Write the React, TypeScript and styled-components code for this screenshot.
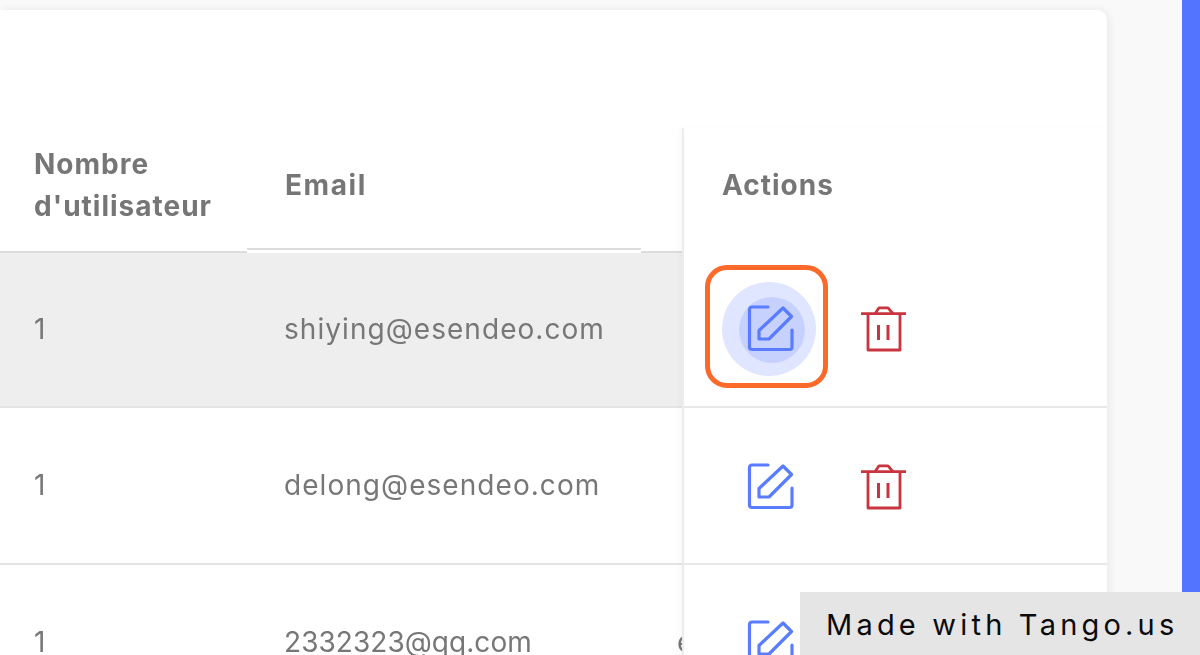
import React from "react";
import styled, { createGlobalStyle } from "styled-components";

const Global = createGlobalStyle`
  html, body { margin: 0; padding: 0; height: 100%; background: #f9f9f9; overflow: hidden; }
  body { font-family: "Inter", "Liberation Sans", sans-serif; }
`;

const Page = styled.div`
  position: relative;
  display: flex;
  width: 1200px;
  height: 655px;
  overflow: hidden;
  background: #f9f9f9;
`;

const Content = styled.div`
  display: flex;
  width: 1200px;
  height: 655px;
  filter: blur(0.7px);
`;

const Main = styled.main`
  flex: none;
  width: 1107px;
  padding-top: 10px;
`;

const Card = styled.section`
  display: flex;
  height: 800px;
  background: #fff;
  border-radius: 0 10px 0 0;
  box-shadow: 2px 0 8px rgba(0, 0, 0, 0.07);
`;

const TableArea = styled.div`
  flex: none;
  width: 683px;
  padding-top: 118px;
  overflow: hidden;
`;

const HeadRow = styled.div`
  display: grid;
  grid-template-columns: 247px 394px 42px;
  height: 125px;
  align-items: start;
`;

const HeadCell = styled.div<{ $raised?: boolean }>`
  display: flex;
  align-items: center;
  box-sizing: border-box;
  height: ${(p) => (p.$raised ? "122px" : "125px")};
  padding-left: ${(p) => (p.$raised ? 38 : 34)}px;
  padding-bottom: ${(p) => (p.$raised ? 6 : 9)}px;
  border-bottom: 2px solid #dcdcdc;
  color: #767676;
  font-size: 28px;
  font-weight: 700;
  line-height: 42px;
  letter-spacing: ${(p) => (p.$raised ? 1.6 : 1)}px;
  white-space: nowrap;
`;

const ClippedHead = styled(HeadCell)`
  padding-left: 40px;
  overflow: hidden;
`;

const Row = styled.div<{ $active?: boolean }>`
  display: grid;
  grid-template-columns: 247px 394px 42px;
  height: ${(p) => (p.$active ? 155 : 157)}px;
  box-sizing: border-box;
  align-items: center;
  padding-bottom: ${(p) => (p.$active ? 1 : 2)}px;
  border-bottom: 2px solid #e4e4e4;
  background: ${(p) => (p.$active ? "#eeeeee" : "#fff")};
  color: #777;
  font-size: 28px;
`;

const Cell = styled.div`
  padding-left: 34px;
  white-space: nowrap;
  letter-spacing: 0.96px;
`;

const EmailCell = styled(Cell)<{ $numeric?: boolean }>`
  padding-left: 37px;
  letter-spacing: ${(p) => (p.$numeric ? 0.05 : 1.05)}px;
`;

const ClippedCell = styled(Cell)`
  padding-left: 36px;
  overflow: hidden;
`;

const ActionsColumn = styled.div`
  flex: 1;
  border-left: 2px solid #ececec;
  box-shadow: -3px 0 5px rgba(0, 0, 0, 0.025);
  margin-top: 118px;
  margin-left: -1px;
`;

const ActionsHead = styled.div`
  height: 124px;
  box-sizing: border-box;
  display: flex;
  align-items: center;
  padding-left: 38px;
  padding-bottom: 11px;
  color: #767676;
  font-size: 28px;
  font-weight: 700;
  letter-spacing: 1px;
`;

const ActionRow = styled.div<{ $first?: boolean }>`
  height: ${(p) => (p.$first ? 156 : 157)}px;
  box-sizing: border-box;
  display: flex;
  align-items: center;
  padding-left: 21px;
  padding-bottom: ${(p) => (p.$first ? 5 : 2)}px;
  border-bottom: 2px solid #e8e8e8;
`;

const FocusBox = styled.button<{ $focused?: boolean }>`
  flex: none;
  box-sizing: border-box;
  width: 123px;
  height: 123px;
  display: flex;
  align-items: center;
  justify-content: center;
  padding: 4px 0 0 4px;
  background: transparent;
  border: 5px solid ${(p) => (p.$focused ? "#fb6a2a" : "transparent")};
  border-radius: 22px;
`;

const Halo = styled.span<{ $on?: boolean }>`
  width: 94px;
  height: 94px;
  flex: none;
  display: flex;
  align-items: center;
  justify-content: center;
  border-radius: 50%;
  background: ${(p) => (p.$on ? "#e0e6ff" : "transparent")};
`;

const HaloInner = styled.span<{ $on?: boolean }>`
  width: 66px;
  height: 66px;
  margin: 3px 0 0 6px;
  display: flex;
  align-items: center;
  justify-content: center;
  border-radius: 50%;
  background: ${(p) => (p.$on ? "#c6d1fe" : "transparent")};
`;

const EditGlyph = styled.svg`
  flex: none;
  margin: 0 1px 4px 0;
`;

const TrashButton = styled.span`
  display: flex;
  margin: 5px 0 0 32px;
`;

const Strip = styled.aside`
  flex: none;
  width: 18px;
  height: 100%;
  margin-left: 75px;
  background: #5274ff;
`;

const TangoTag = styled.div`
  position: absolute;
  right: 0;
  bottom: 0;
  width: 400px;
  height: 63px;
  box-sizing: border-box;
  padding: 2px 0 0 26px;
  display: flex;
  align-items: center;
  background: #e5e5e5;
  color: #0b0b0b;
  font-size: 29px;
  letter-spacing: 4.2px;
  white-space: nowrap;
`;

const EditIcon = () => (
  <EditGlyph width="48" height="48" viewBox="0 0 48 48" fill="none" stroke="#5a7dff" strokeWidth="3.2" strokeLinejoin="round" strokeLinecap="round">
    <path d="M21 3H5a2.5 2.5 0 0 0-2.5 2.5v37.5a2.5 2.5 0 0 0 2.5 2.5h37.5a2.5 2.5 0 0 0 2.5-2.5V26" />
    <path d="M12 26.5 36 4l8.5 8.5L22 35H12z" />
  </EditGlyph>
);

const TrashIcon = () => (
  <svg width="47" height="48" viewBox="0 0 47 48" fill="none" stroke="#c9343f" strokeWidth="2.8" strokeLinejoin="round">
    <path d="M1 8.7h45" />
    <path d="M8 8.7V45h32V8.7" />
    <path d="M15 8.7 19 2.8h9l5 5.9" />
    <path d="M18.5 20v15M28 20v15" strokeWidth="3" />
  </svg>
);

const rows = [
  { n: "1", email: "shiying@esendeo.com", extra: "", numeric: false },
  { n: "1", email: "delong@esendeo.com", extra: "", numeric: false },
  { n: "1", email: "2332323@qq.com", extra: "esendeo", numeric: true },
];

export default function App() {
  return (
    <Page>
      <Global />
      <Content>
        <Main>
          <Card>
            <TableArea>
              <HeadRow>
                <HeadCell>
                  <span>
                    Nombre
                    <br />
                    d'utilisateur
                  </span>
                </HeadCell>
                <HeadCell $raised>Email</HeadCell>
                <ClippedHead>Date</ClippedHead>
              </HeadRow>
              {rows.map((r, i) => (
                <Row key={r.email} $active={i === 0}>
                  <Cell>{r.n}</Cell>
                  <EmailCell $numeric={r.numeric}>{r.email}</EmailCell>
                  <ClippedCell>{r.extra}</ClippedCell>
                </Row>
              ))}
            </TableArea>
            <ActionsColumn>
              <ActionsHead>Actions</ActionsHead>
              {rows.map((r, i) => (
                <ActionRow key={r.email} $first={i === 0}>
                  <FocusBox $focused={i === 0} aria-label="Modifier">
                    <Halo $on={i === 0}>
                      <HaloInner $on={i === 0}>
                        <EditIcon />
                      </HaloInner>
                    </Halo>
                  </FocusBox>
                  <TrashButton>
                    <TrashIcon />
                  </TrashButton>
                </ActionRow>
              ))}
            </ActionsColumn>
          </Card>
        </Main>
        <Strip />
      </Content>
      <TangoTag>Made with Tango.us</TangoTag>
    </Page>
  );
}
